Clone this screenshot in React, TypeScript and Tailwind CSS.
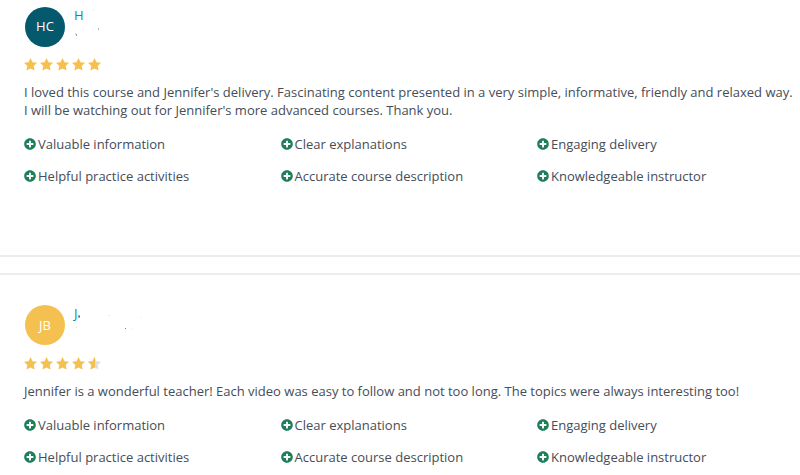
import { FaPlusCircle } from "react-icons/fa";

type Speck = { x: number; y: number; w: number; h: number; color: string };

type Review = {
  initials: string;
  avatar: string;
  spacing: string;
  starSpacing: string;
  name: string;
  rating: number;
  lines: string[];
  specks: Speck[];
};

const tags = [
  "Valuable information",
  "Clear explanations",
  "Engaging delivery",
  "Helpful practice activities",
  "Accurate course description",
  "Knowledgeable instructor",
];

const reviews: Review[] = [
  {
    initials: "HC",
    avatar: "bg-[#045a6c]",
    spacing: "h-[257px] pt-[7px] border-b-2",
    starSpacing: "mt-[11px]",
    name: "H",
    rating: 5,
    lines: [
      "I loved this course and Jennifer's delivery. Fascinating content presented in a very simple, informative, friendly and relaxed way.",
      "I will be watching out for Jennifer's more advanced courses. Thank you.",
    ],
    specks: [
      { x: 50, y: 26, w: 1, h: 2, color: "#e8d3c8" },
      { x: 51, y: 27, w: 1, h: 2, color: "#a39c9a" },
      { x: 73, y: 21, w: 1, h: 2, color: "#b4b4c4" },
      { x: 68, y: 2, w: 1, h: 2, color: "#eeeeee" },
    ],
  },
  {
    initials: "JB",
    avatar: "bg-[#f4c150] pt-px",
    spacing: "pt-[30px]",
    starSpacing: "mt-3",
    name: "J",
    rating: 4.5,
    lines: [
      "Jennifer is a wonderful teacher! Each video was easy to follow and not too long. The topics were always interesting too!",
    ],
    specks: [
      { x: 53, y: 10, w: 2, h: 3, color: "#8fb4c4" },
      { x: 54, y: 11, w: 1, h: 1, color: "#4c6474" },
      { x: 100, y: 23, w: 1, h: 1, color: "#77777c" },
      { x: 106, y: 23, w: 1, h: 1, color: "#ececec" },
      { x: 83, y: 10, w: 2, h: 1, color: "#ececec" },
      { x: 115, y: 12, w: 2, h: 1, color: "#edf4f6" },
      { x: 51, y: 22, w: 1, h: 1, color: "#dedede" },
    ],
  },
];

function StarShape({ className }: { className: string }) {
  return (
    <svg viewBox="0 0 13 13" className={`size-[13px] max-w-none ${className}`} fill="currentColor" aria-hidden="true">
      <path d="M6.5 0.1 L8.5 4.2 L13 4.8 L9.7 8 L10.6 12.6 L6.5 10.4 L2.4 12.6 L3.3 8 L0 4.8 L4.5 4.2 Z" />
    </svg>
  );
}

function Star({ fill }: { fill: number }) {
  return (
    <span className="relative block size-[13px]">
      {fill < 1 && <StarShape className="text-[#dedfe0]" />}
      <span className="absolute inset-y-0 left-0 overflow-hidden" style={{ width: `${fill * 100}%` }}>
        <StarShape className="text-[#f4c150]" />
      </span>
    </span>
  );
}

function ReviewCard({ review }: { review: Review }) {
  return (
    <article className={`border-[#ebecec] pl-6 ${review.spacing}`}>
      <header className="relative ml-px flex h-10">
        <div className={`flex size-10 items-center justify-center rounded-full text-[13px] text-white ${review.avatar}`}>
          {review.initials}
        </div>
        <div className="ml-[9px] text-[13px] leading-4 text-[#1187a3]">{review.name}</div>
        {review.specks.map((s, i) => (
          <span
            key={i}
            className="absolute"
            style={{ left: s.x, top: s.y, width: s.w, height: s.h, backgroundColor: s.color }}
          />
        ))}
      </header>
      <div className={`flex h-[13px] gap-[3px] ${review.starSpacing}`}>
        {[0, 1, 2, 3, 4].map((i) => (
          <Star key={i} fill={Math.min(1, Math.max(0, review.rating - i))} />
        ))}
      </div>
      <div className="mt-3 whitespace-nowrap text-[13px] leading-[18px]">
        {review.lines.map((line) => (
          <p key={line}>{line}</p>
        ))}
      </div>
      <ul className="mt-[15px] grid grid-cols-[256.5px_256.5px_auto] gap-y-3">
        {tags.map((tag) => (
          <li key={tag} className="flex h-5 items-center gap-0.5 whitespace-nowrap text-[13px] leading-5">
            <FaPlusCircle className="size-3 shrink-0 text-[#1e7e5a]" />
            {tag}
          </li>
        ))}
      </ul>
    </article>
  );
}

export default function App() {
  return (
    <main className="h-[475px] w-[800px] overflow-hidden bg-white font-['Open_Sans',sans-serif] text-[#454d57]">
      <ReviewCard review={reviews[0]} />
      <div className="h-[18px] border-b-2 border-[#ebecec]" />
      <ReviewCard review={reviews[1]} />
    </main>
  );
}
